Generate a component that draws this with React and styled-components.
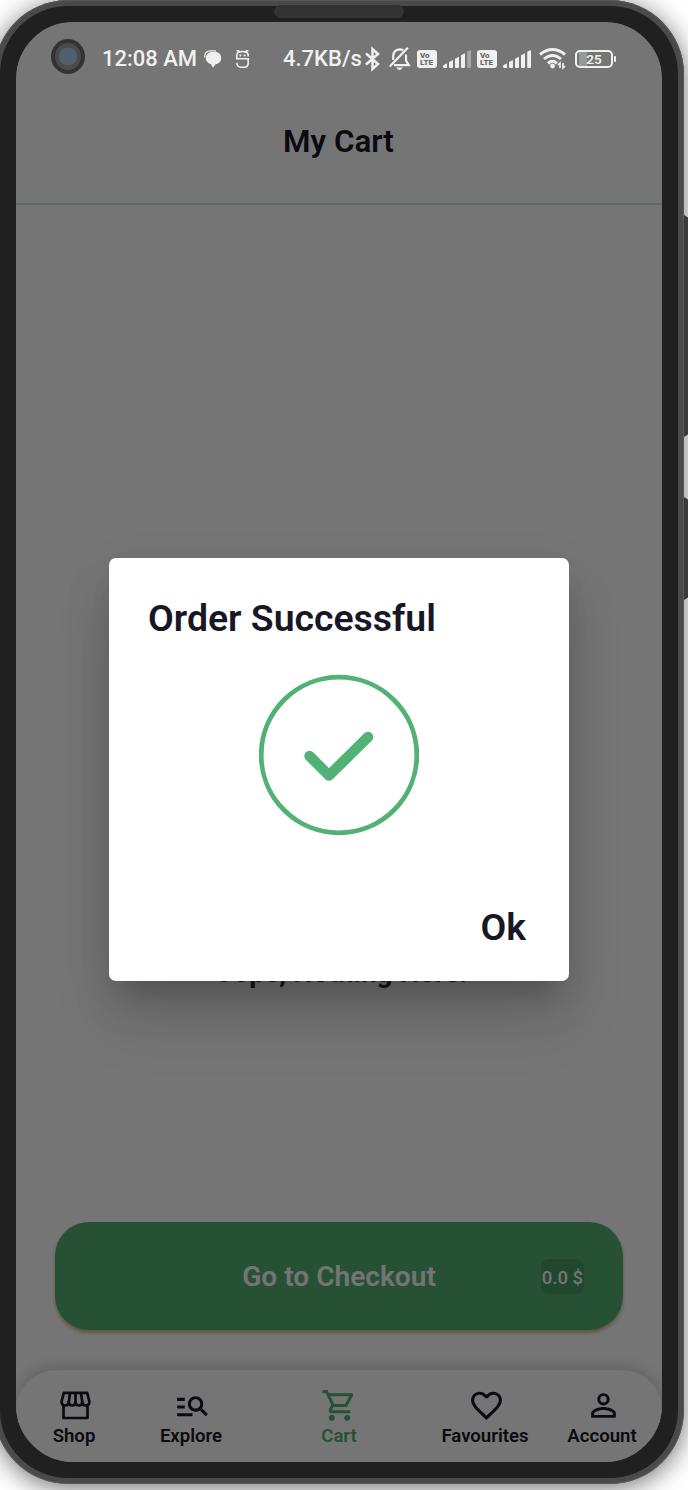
import React from "react";
import styled, { createGlobalStyle, css } from "styled-components";
import {
  MdManageSearch,
  MdOutlineShoppingCart,
  MdFavoriteBorder,
  MdPersonOutline,
} from "react-icons/md";

const GlobalStyle = createGlobalStyle`
  * { box-sizing: border-box; }
  body { margin: 0; background: #fff; overflow: hidden; }
  #root { width: 688px; height: 1490px; overflow: hidden; }
  body, button { font-family: Roboto, "Liberation Sans", sans-serif; }
`;

const Stage = styled.div`
  position: relative;
  width: 688px;
  height: 1490px;
  overflow: hidden;
`;

const Phone = styled.div`
  position: relative;
  width: 690px;
  height: 1484px;
  margin-left: -6px;
  padding: 6px;
  border-radius: 74px;
  background: #4a4a4a;
  box-shadow: inset 0 0 0 1px #585858, 0 4px 26px rgba(0, 0, 0, 0.56);
`;

const Bezel = styled.div`
  height: 100%;
  padding: 16px;
  border-radius: 68px;
  background: #202020;
`;

const Screen = styled.div`
  position: relative;
  height: 100%;
  &::after {
    content: "";
    position: absolute;
    z-index: 5;
    inset: -3px;
    border: 3px solid #202020;
    border-radius: 60px;
    pointer-events: none;
  }
`;

const Page = styled.div`
  display: flex;
  flex-direction: column;
  height: 100%;
  border-radius: 56px;
  overflow: hidden;
  background: #fff;
`;

const SideButton = styled.div`
  position: absolute;
  left: 684px;
  top: ${(p) => p.$top}px;
  width: 8px;
  height: ${(p) => p.$height}px;
  background: #3a3a39;
  clip-path: polygon(0 0, 100% 5px, 100% calc(100% - 5px), 0 100%);
`;

const Speaker = styled.div`
  position: absolute;
  left: 280px;
  top: 5px;
  width: 130px;
  height: 13px;
  border-radius: 7px;
  background: #333;
`;

const Camera = styled.div`
  position: absolute;
  z-index: 4;
  left: 35px;
  top: 17px;
  width: 34px;
  height: 35px;
  border-radius: 50%;
  border: 4.5px solid #333;
  background: radial-gradient(circle, #4f606e 8.5px, #4b4b4b 9.3px);
`;

const StatusBar = styled.div`
  position: relative;
  z-index: 3;
  display: flex;
  align-items: center;
  flex: none;
  height: 73px;
  padding: 0 44px 0 86px;
  color: #f0f0f0;
  font-size: 22px;
  font-weight: 500;
  white-space: nowrap;
`;

const StatusText = styled.span`
  width: ${(p) => p.$width}px;
  margin-left: ${(p) => p.$gap || 0}px;
  line-height: 26px;
`;

const Glyph = styled.svg`
  display: block;
  flex: none;
  margin-left: ${(p) => p.$gap || 0}px;
  overflow: visible;
`;

const VolteBadge = styled.span`
  display: flex;
  flex-direction: column;
  justify-content: center;
  flex: none;
  width: 20px;
  height: 18px;
  margin-left: ${(p) => p.$gap}px;
  padding-left: 3px;
  border-radius: 3px;
  background: #f0f0f0;
  color: #6b6b6b;
  font-size: 8px;
  font-weight: 900;
  line-height: 7px;
`;

const Battery = styled.span`
  position: relative;
  display: flex;
  align-items: center;
  justify-content: center;
  flex: none;
  width: 38px;
  height: 18px;
  margin-left: 9px;
  border: 2px solid #f0f0f0;
  border-radius: 5px;
  background: linear-gradient(90deg, transparent 2px, #999 2px, #999 10px, transparent 10px);
  font-size: 13.5px;
  font-weight: 600;
  &::after {
    content: "";
    position: absolute;
    right: -5px;
    top: 4px;
    width: 2px;
    height: 6px;
    border-radius: 1px;
    background: #f0f0f0;
  }
`;

const AppBar = styled.header`
  display: flex;
  align-items: center;
  justify-content: center;
  flex: none;
  height: 110px;
  padding-bottom: 14px;
  border-bottom: 2px solid #cfe6dc;
`;

const Title = styled.h1`
  margin: 0 1px 0 0;
  color: #181725;
  font-size: 31.4px;
  font-weight: 600;
  line-height: 36px;
`;

const CartBody = styled.main`
  display: flex;
  flex: 1;
  flex-direction: column;
  justify-content: space-between;
  padding: 752px 39px 40px;
`;

const EmptyText = styled.p`
  margin: 0;
  padding-left: 3px;
  color: #343434;
  font-size: 27.9px;
  font-weight: 700;
  line-height: 32px;
  text-align: center;
`;

const CheckoutButton = styled.button`
  display: grid;
  grid-template-columns: 1fr auto 1fr;
  align-items: center;
  width: 568px;
  height: 108px;
  padding: 0 39px;
  border: 0;
  border-radius: 34px;
  background: #53b175;
  color: #fcfcfc;
  font-size: 28.1px;
  font-weight: 600;
  box-shadow: 0 2.5px 3.5px rgba(190, 140, 70, 0.6);
`;

const CheckoutLabel = styled.span`
  grid-column: 2;
`;

const Price = styled.span`
  grid-column: 3;
  justify-self: end;
  width: 43px;
  height: 35px;
  padding-top: 1px;
  border-radius: 8px;
  background: #489e67;
  font-size: 18.5px;
  font-weight: 500;
  line-height: 36px;
  text-align: center;
  white-space: nowrap;
`;

const NavBar = styled.nav`
  display: grid;
  grid-template-columns: 116px 118px 178px 114px 120px;
  flex: none;
  height: 92px;
  padding-top: 17px;
  border-radius: 40px 40px 0 0;
  background: #fff;
  box-shadow: 0 -4px 14px rgba(0, 0, 0, 0.16);
`;

const NavItem = styled.a`
  display: flex;
  flex-direction: column;
  align-items: center;
  color: ${(p) => (p.$active ? "#53b175" : "#181725")};
  font-size: 18.6px;
  font-weight: 600;
  line-height: 24px;
  svg {
    display: block;
    width: 37px;
    height: 37px;
    margin-left: ${(p) => (p.$active ? 1 : 3)}px;
  }
`;

const Scrim = styled.div`
  position: absolute;
  z-index: 2;
  inset: 0;
  display: flex;
  align-items: center;
  justify-content: center;
  padding-top: 54px;
  border-radius: 56px;
  overflow: hidden;
  background: rgba(0, 0, 0, 0.54);
`;

const Dialog = styled.section`
  display: flex;
  flex-direction: column;
  width: 460px;
  height: 423px;
  padding: 38px 40px 0;
  border-radius: 7px;
  background: #fff;
  color: #181725;
  box-shadow: 0 20px 27px -12px rgba(0, 0, 0, 0.2), 0 42px 58px 2px rgba(0, 0, 0, 0.1),
    0 16px 50px 2px rgba(0, 0, 0, 0.08);
`;

const dialogType = css`
  margin: 0;
  font-size: 37.4px;
  font-weight: 600;
  line-height: 44px;
`;

const DialogTitle = styled.h2`
  ${dialogType}
  margin-left: -1px;
`;

const SuccessIcon = styled.svg`
  display: block;
  flex: none;
  align-self: center;
  margin-top: 34px;
`;

const OkButton = styled.button`
  ${dialogType}
  align-self: flex-end;
  margin-top: 69px;
  margin-right: 3px;
  padding: 0;
  border: 0;
  background: none;
  color: inherit;
`;

const Signal = ({ gap, weak }) => (
  <Glyph width="28" height="18" viewBox="0 0 28 18" fill="#f0f0f0" $gap={gap}>
    <path d="M0 16.500Q0 15 1.500 14.600L4 13.500V18H1.200Q0 18 0 16.800Z" />
    <path d="M6 12 10 10V17q0 1-1 1H7q-1 0-1-1Z" />
    <path d="M12 8.800 16 6.800V17q0 1-1 1h-2q-1 0-1-1Z" />
    <path d="M18 5.300 22 3.300V17q0 1-1 1h-2q-1 0-1-1Z" />
    <path d="M24.200 1.800 28 0V17q0 1-1 1h-1.800q-1 0-1-1Z" opacity={weak ? 0.4 : 1} />
  </Glyph>
);

const Volte = ({ gap }) => (
  <VolteBadge $gap={gap}>
    <span>Vo</span>
    <span>LTE</span>
  </VolteBadge>
);

const StoreIcon = () => (
  <svg viewBox="0 0 37 37" fill="none" stroke="currentColor" strokeWidth="2.700" strokeLinejoin="round">
    <path d="M6.800 5.800H30.200L32.400 14.500Q32.400 18.500 28.800 18.500Q25.300 18.500 25.300 15Q25.300 18.500 21.900 18.500Q18.500 18.500 18.500 15Q18.500 18.500 15.100 18.500Q11.700 18.500 11.700 15Q11.700 18.500 8.200 18.500Q4.600 18.500 4.600 14.500Z" />
    <path d="M13 6 11.700 15.500M18.500 6v9.500M24 6l1.300 9.500" />
    <path d="M6.500 18.500V31H30.500V18.500" />
  </svg>
);

const navItems = [
  ["Shop", StoreIcon],
  ["Explore", MdManageSearch],
  ["Cart", MdOutlineShoppingCart],
  ["Favourites", MdFavoriteBorder],
  ["Account", MdPersonOutline],
];

export default function App() {
  return (
    <Stage>
      <GlobalStyle />
      <Phone>
        <Bezel>
          <Screen>
            <Camera />
            <Page>
              <StatusBar>
                <StatusText $width={102}>12:08 AM</StatusText>
                <Glyph width="17" height="18" viewBox="0 0 17 18">
                  <path d="M.6 7.500C.2 3 3 .8 6.500.8H12" fill="none" stroke="#f0f0f0" strokeWidth="1.3" />
                  <path d="M7 2H12c7 .6 7.200 11.500-.5 12.300L9 17.800 7 14.300C0 12.500 0 3.300 7 2Z" fill="#f0f0f0" />
                </Glyph>
                <Glyph width="13" height="18" viewBox="0 0 13 18" $gap={15} fill="none" stroke="#f0f0f0" strokeWidth="1.600">
                  <path d="M.5.700h2L3.500 2q3-1 6 0l1-1.300h2M.8 8.500V5Q1 2.500 3.500 2M12.200 6.500V5Q12 2.500 9.500 2M0 8.800h12.200V13q0 4.200-4 4.200H5q-4 0-4.200-4.400" />
                  <path d="M3.500 5.500h1.800M7.700 5.500h1.800" strokeWidth="1.800" />
                </Glyph>
                <StatusText $width={82} $gap={34}>4.7KB/s</StatusText>
                <Glyph width="15" height="24" viewBox="0 0 15 24" fill="none" stroke="#f0f0f0" strokeWidth="2.5">
                  <path d="M1 6.500 13 17l-5.500 5V2L13 7 1 17.500" />
                </Glyph>
                <Glyph width="21" height="23" viewBox="0 0 21 23" $gap={9} fill="none" stroke="#f0f0f0" strokeWidth="2.2">
                  <path d="M4.200 13V9Q4.500 2.800 10.500 2.300q2 0 3.600 1M17 7.500v6l2.800 4.700H5M.8 19.500 18.800.8" />
                  <path d="M7.300 20.500h6.400q-1 2.400-3.200 2.400t-3.200-2.400Z" fill="#f0f0f0" stroke="none" />
                </Glyph>
                <Volte gap={7} />
                <Signal gap={6} weak />
                <Volte gap={6} />
                <Signal gap={6} />
                <Glyph width="27" height="21" viewBox="0 0 27 21" $gap={8} fill="none" stroke="#f0f0f0" strokeWidth="2.900">
                  <path d="M1 6.500q12.500-10 25 0M5 11q8.500-7 17 0M9 15.300q4.500-4 9 0" />
                  <circle cx="13.5" cy="18" r="2.4" fill="#f0f0f0" stroke="none" />
                  <path d="M21 20v-5l-2 2M24 15v5l2-2" strokeWidth="1.600" />
                </Glyph>
                <Battery>25</Battery>
              </StatusBar>
              <AppBar>
                <Title>My Cart</Title>
              </AppBar>
              <CartBody>
                <EmptyText>Oops, Nothing Here!</EmptyText>
                <CheckoutButton>
                  <CheckoutLabel>Go to Checkout</CheckoutLabel>
                  <Price>0.0 $</Price>
                </CheckoutButton>
              </CartBody>
              <NavBar>
                {navItems.map(([label, Icon]) => (
                  <NavItem key={label} $active={label === "Cart"}>
                    <Icon />
                    {label}
                  </NavItem>
                ))}
              </NavBar>
            </Page>
            <Scrim>
              <Dialog>
                <DialogTitle>Order Successful</DialogTitle>
                <SuccessIcon width="160" height="162" viewBox="0 0 160 162" fill="none" stroke="#53b175">
                  <circle cx="80" cy="81" r="77.8" strokeWidth="4.8" />
                  <path d="M50.500 82 70 101.500 109 63" strokeWidth="10.500" strokeLinecap="round" strokeLinejoin="round" />
                </SuccessIcon>
                <OkButton>Ok</OkButton>
              </Dialog>
            </Scrim>
          </Screen>
        </Bezel>
        <Speaker />
      </Phone>
      <SideButton $top={215} $height={222} />
      <SideButton $top={497} $height={103} />
    </Stage>
  );
}
